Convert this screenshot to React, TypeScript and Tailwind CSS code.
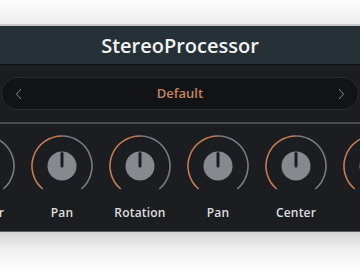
import React from 'react';

const knobs = ['Center', 'Pan', 'Rotation', 'Pan', 'Center', 'Pan'];

function Knob({ label }: { label: string }) {
  return (
    <div className="w-[78px] shrink-0 flex flex-col items-center pt-[7px]">
      <svg width="70" height="70" viewBox="0 0 70 70">
        <path d="M 15.7 58 A 30 30 0 0 1 35 5" fill="none" stroke="#c47c55" strokeWidth="1.6" />
        <path d="M 35 5 A 30 30 0 0 1 54.3 58" fill="none" stroke="#7a7b80" strokeWidth="1.6" />
        <circle cx="35" cy="35" r="14.5" fill="#88898f" />
        <line x1="35" y1="22.5" x2="35" y2="35" stroke="#1c1d21" strokeWidth="3" strokeLinecap="round" />
      </svg>
      <span className="mt-[4px] text-[12px] leading-4 font-semibold text-[#dedede] tracking-[0.2px]">{label}</span>
    </div>
  );
}

export default function App() {
  return (
    <div className="w-[360px] h-[270px] overflow-hidden flex flex-col bg-white font-['Open_Sans',sans-serif]">
      <div className="h-[24px] bg-gradient-to-b from-[#fdfdfd] to-[#ececec]" />
      <div className="h-[2px] bg-[#c9c9c9]" />
      <div className="h-[38px] bg-[#263137] flex items-center justify-center">
        <h1 className="text-[20px] font-semibold text-[#f2f2f2] leading-none pt-[1px]">StereoProcessor</h1>
      </div>
      <div className="h-[1px] bg-[#0e0f11]" />
      <div className="bg-[#1c1d21] flex flex-col">
        <div className="pt-[12px] px-[1px]">
          <div className="h-[33px] rounded-full bg-[#121316] border border-[#2b2c30] flex items-center justify-between px-[12px]">
            <svg width="10" height="12" viewBox="0 0 10 12"><path d="M7 1 L2.5 6 L7 11" fill="none" stroke="#8a8a8e" strokeWidth="1" /></svg>
            <span className="text-[13px] font-semibold text-[#c58462] pt-[1px]">Default</span>
            <svg width="10" height="12" viewBox="0 0 10 12"><path d="M3 1 L7.5 6 L3 11" fill="none" stroke="#8a8a8e" strokeWidth="1" /></svg>
          </div>
        </div>
        <div className="mt-[11px] h-[1px] bg-[#151619]" />
        <div className="h-[2px] bg-[#4a4c50]" />
        <div className="h-[107px] flex ml-[-55px] overflow-hidden">
          {knobs.map((k, i) => (
            <Knob key={i} label={k} />
          ))}
        </div>
      </div>
      <div className="h-[1px] bg-[#5a5e62]" />
      <div className="flex-1 bg-gradient-to-b from-[#d6d6d6] via-[#f2f2f2] to-[#fdfdfd]" />
    </div>
  );
}
